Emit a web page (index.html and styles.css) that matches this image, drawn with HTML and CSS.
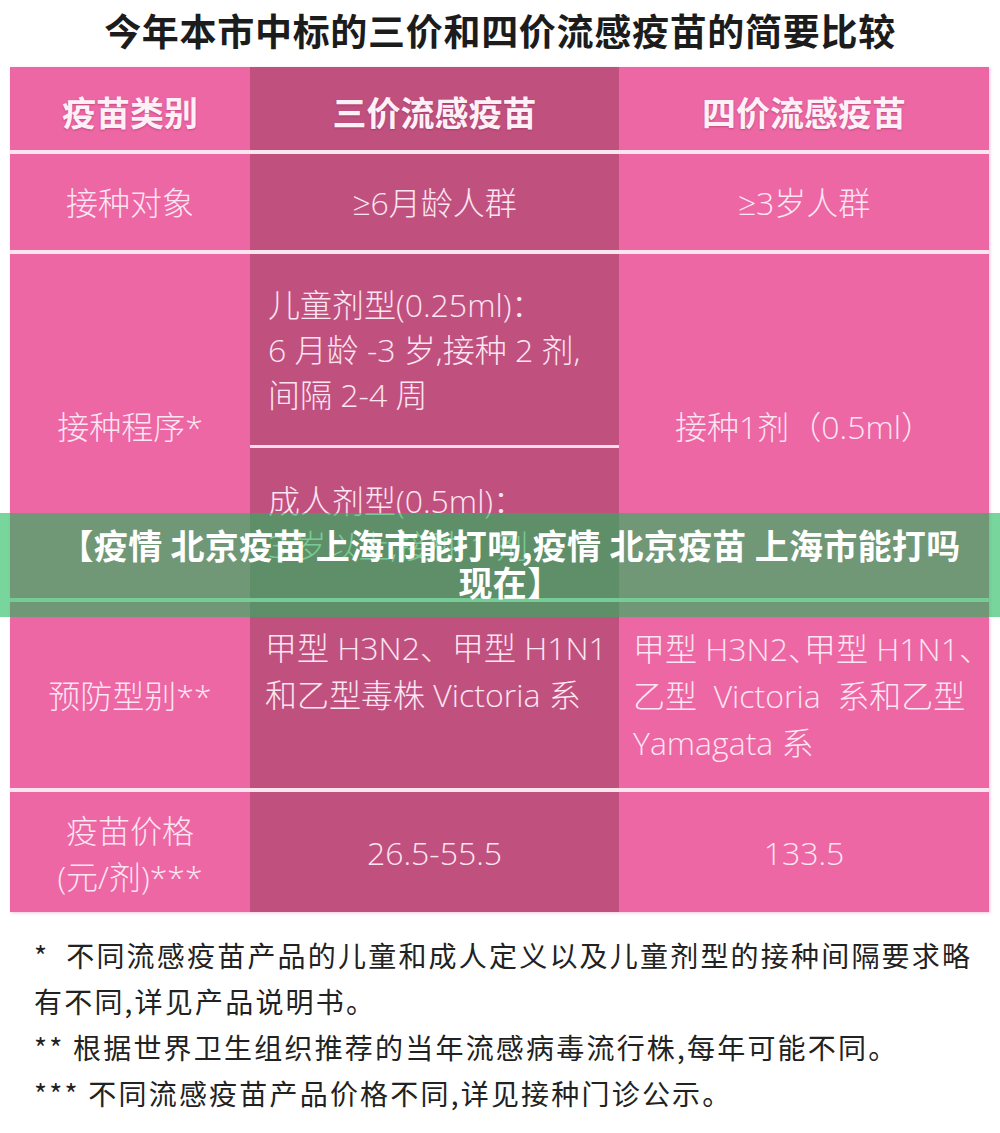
FILE: index.html
```html
<!DOCTYPE html>
<html lang="zh-CN">
<head>
<meta charset="utf-8">
<title>流感疫苗比较</title>
<link rel="stylesheet" href="styles.css">
</head>
<body>
<div class="page">
  <h1 class="title">今年本市中标的三价和四价流感疫苗的简要比较</h1>
  <div class="table">
    <div class="cell c1 head">疫苗类别</div>
    <div class="cell c2 head">三价流感疫苗</div>
    <div class="cell c3 head">四价流感疫苗</div>

    <div class="cell c1">接种对象</div>
    <div class="cell c2">≥6月龄人群</div>
    <div class="cell c3">≥3岁人群</div>

    <div class="cell c1">接种程序*</div>
    <div class="split">
      <div class="sub sub-a">儿童剂型(0.25ml)：<br>6 月龄 -3 岁,接种 2 剂,<br>间隔 2-4 周</div>
      <div class="sub sub-b">成人剂型(0.5ml)：<br>3 岁以上,接种 1 剂</div>
    </div>
    <div class="cell c3">接种1剂（0.5ml）</div>

    <div class="cell c1">预防型别**</div>
    <div class="cell c2 top left"><div class="txt">甲型 H3N2、甲型 H1N1<br>和乙型毒株 Victoria 系</div></div>
    <div class="cell c3 top left"><div class="txt">甲型 H3N2<span class="half">、</span>甲型 H1N1<span class="half">、</span><br>乙型&nbsp; Victoria&nbsp; 系和乙型<br>Yamagata 系</div></div>

    <div class="cell c1 two">疫苗价格<br>(元/剂)***</div>
    <div class="cell c2">26.5-55.5</div>
    <div class="cell c3">133.5</div>
  </div>
  <div class="notes">
    <p>*&nbsp; 不同流感疫苗产品的儿童和成人定义以及儿童剂型的接种间隔要求略</p>
    <p>有不同,详见产品说明书。</p>
    <p>** 根据世界卫生组织推荐的当年流感病毒流行株,每年可能不同。</p>
    <p>*** 不同流感疫苗产品价格不同,详见接种门诊公示。</p>
  </div>
  <div class="band">【疫情 北京疫苗 上海市能打吗,疫情 北京疫苗 上海市能打吗<br>现在】</div>
</div>
</body>
</html>
```

FILE: styles.css
```css
html, body {
  margin: 0;
  padding: 0;
  background: #ffffff;
}

.page {
  position: relative;
  width: 1000px;
  height: 1133px;
  overflow: hidden;
  font-family: "Open Sans", "Noto Sans CJK SC", sans-serif;
}

.title {
  margin: 0;
  height: 67px;
  line-height: 60px;
  text-align: center;
  font-family: "Noto Sans CJK SC", sans-serif;
  font-weight: 700;
  font-size: 37px;
  color: #1c1c1c;
  letter-spacing: 0.7px;
}

.table {
  margin-left: 10px;
  width: 979px;
  display: grid;
  grid-template-columns: 240px 369px 370px;
  grid-template-rows: 83px 96px 344px 186px 120px;
  row-gap: 4px;
  background: #fbe6f0;
  box-shadow: 1px 1px 3px rgba(230, 150, 190, 0.5);
}

.cell {
  display: flex;
  align-items: center;
  justify-content: center;
  text-align: center;
  font-size: 32px;
  font-weight: 300;
  line-height: 47px;
  color: #fde5f1;
}

.c1, .c3 {
  background: #ec67a4;
}

.c2 {
  background: #c0517f;
}

.head {
  font-family: "Noto Sans CJK SC", sans-serif;
  font-weight: 700;
  font-size: 34px;
  padding-top: 6px;
  color: #fdf0f6;
  text-shadow: 0 1px 2px rgba(120, 20, 60, 0.35);
}

.top {
  align-items: flex-start;
  padding-top: 22px;
}

.left {
  justify-content: flex-start;
  text-align: left;
  white-space: nowrap;
}

.c2.left {
  padding-left: 15px;
}

.c3.left {
  padding-left: 14px;
}

.half {
  font-family: "Noto Sans CJK SC", sans-serif;
  font-feature-settings: "halt" 1;
}

.two {
  line-height: 46px;
  padding-top: 4px;
}

.split {
  display: flex;
  flex-direction: column;
  gap: 3px;
  background: #f9dcea;
}

.sub {
  background: #c0517f;
  display: flex;
  align-items: center;
  padding-left: 18px;
  font-size: 32px;
  font-weight: 300;
  line-height: 45px;
  color: #fde5f1;
  white-space: nowrap;
}

.sub-a {
  height: 191px;
}

.sub-b {
  flex: 1;
}

.notes {
  margin: 20px 0 0 34px;
  font-family: "Noto Sans CJK SC", sans-serif;
  font-size: 28px;
  font-weight: 400;
  line-height: 46px;
  letter-spacing: 2.2px;
  color: #222222;
}

.notes p {
  margin: 0;
  white-space: nowrap;
}

.band {
  position: absolute;
  left: 0;
  top: 513px;
  width: 1000px;
  height: 104px;
  box-sizing: border-box;
  padding: 13px 0 0 20px;
  background: rgba(30, 185, 90, 0.6);
  text-align: center;
  font-family: "Noto Sans CJK SC", sans-serif;
  font-weight: 700;
  font-size: 34px;
  line-height: 37px;
  letter-spacing: 0.3px;
  color: #ffffff;
  white-space: nowrap;
}
```
